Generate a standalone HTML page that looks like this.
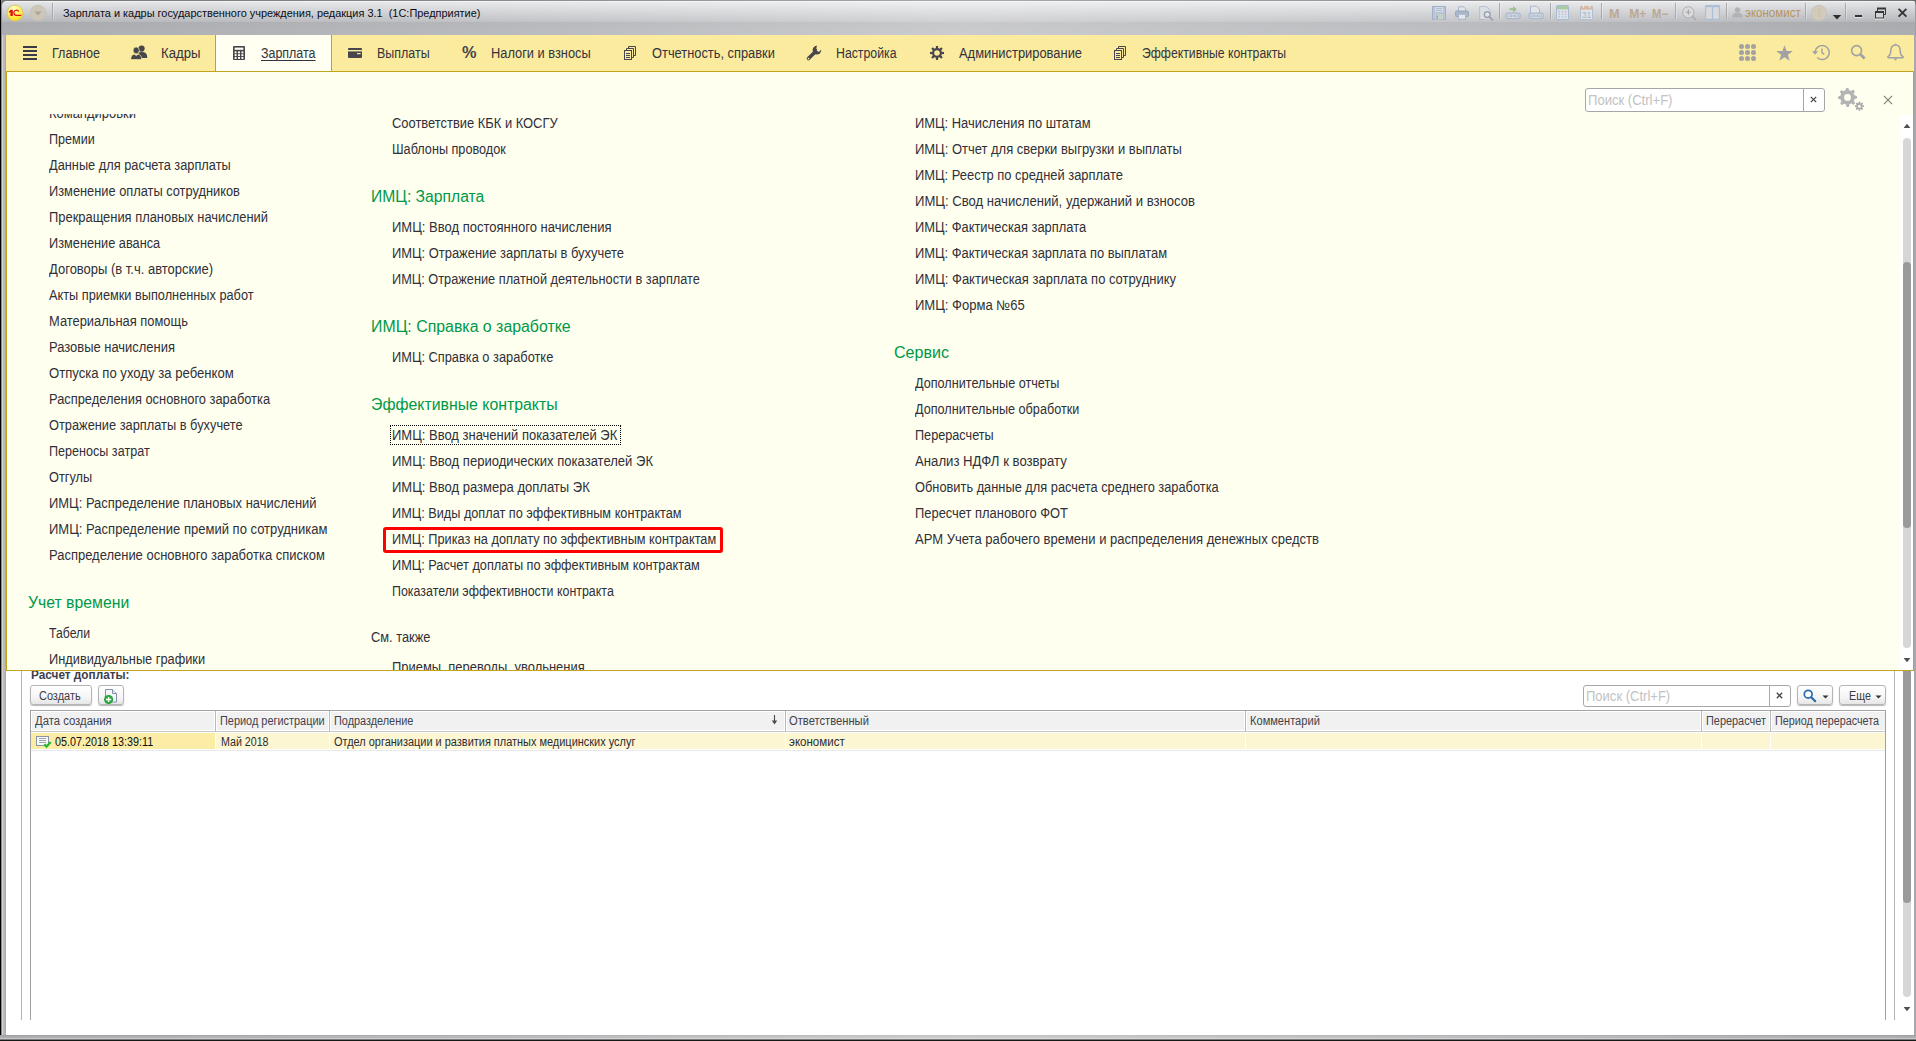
<!DOCTYPE html>
<html lang="ru">
<head>
<meta charset="utf-8">
<title>1C</title>
<style>
html,body{margin:0;padding:0;}
body{width:1916px;height:1041px;overflow:hidden;background:#fff;position:relative;font-family:"Liberation Sans",sans-serif;color:#333;}
.abs{position:absolute;}
.t{position:absolute;white-space:pre;line-height:20px;transform-origin:0 0;}
.mi{font-size:14px;color:#303038;}
.mh{font-size:16px;color:#009848;}
/* window frame */
#titlebar{left:0;top:0;width:1916px;height:35px;background:linear-gradient(to right,rgba(255,255,255,0) 0%,rgba(255,255,255,0.15) 25%,rgba(255,255,255,0.37) 50%,rgba(255,255,255,0.22) 75%,rgba(255,255,255,0) 100%),linear-gradient(to bottom,#767676 0,#767676 1px,#f2f2f2 1px,#f2f2f2 2px,#e3e5e7 2px,#b5b6ba 22px,#a9aaae 22px,#adaeb2 35px);}
#lb{left:0;top:35px;width:6px;height:1006px;background:linear-gradient(to right,#000 0,#000 1px,#8a8a8a 1px,#8a8a8a 2px,#d2d2d2 2px,#d2d2d2 3px,#bababa 3px,#bababa 5px,#a9a9ad 5px,#a9a9ad 6px);}
#rb{left:1914px;top:35px;width:2px;height:1006px;background:#a9a9ad;}
#lb0{left:0;top:0;width:2px;height:35px;background:linear-gradient(to right,#000 0,#000 1px,#8e8e8e 1px,#8e8e8e 2px);}
#rb0{left:1915px;top:2px;width:1px;height:33px;background:#9c9ca0;}
#cornl{left:0;top:0;width:5px;height:5px;}

#bb{left:0;top:1035px;width:1916px;height:6px;background:linear-gradient(to right,rgba(255,255,255,0) 0%,rgba(255,255,255,0.15) 25%,rgba(255,255,255,0.37) 50%,rgba(255,255,255,0.22) 75%,rgba(255,255,255,0) 100%) 0 0/100% 4px no-repeat,linear-gradient(to bottom,#a0a0a4 0,#a0a0a4 1px,#adadb1 1px,#adadb1 3px,#c6c6ca 3px,#c6c6ca 4px,#7c7c7c 4px,#7c7c7c 5px,#161a16 5px,#161a16 6px);}
#secbar{left:6px;top:35px;width:1908px;height:36px;background:#fbeb9e;}
#secline{left:6px;top:71px;width:1908px;height:1px;background:#c2a51e;}
#tab{left:215px;top:35px;width:117px;height:36px;background:#fffff2;border-left:1px solid #c2a51e;border-right:1px solid #c2a51e;box-sizing:border-box;}
.st{font-size:14px;color:#333340;line-height:20px;}
#panel{left:6px;top:72px;width:1908px;height:599px;background:#fffff0;border-left:1px solid #c2a51e;border-right:1px solid #c2a51e;border-bottom:1px solid #c2a51e;box-sizing:border-box;overflow:hidden;}
#clip{left:0;top:42px;width:1893px;height:556px;overflow:hidden;}
#clipin{left:-7px;top:-114px;width:1916px;height:700px;}
.tt{font-size:11px;color:#0c0c14;}
.us{font-size:12px;color:#b6955a;}
.mm{font-size:12px;font-weight:bold;color:#bba996;}
.ph{font-size:14px;color:#c2c2c2;}
.lt{font-size:12px;color:#3c3c44;}
.lb{font-size:12px;font-weight:bold;color:#3e3e4c;}
.lh{font-size:12px;color:#42424a;}
.lr{font-size:12px;color:#2c2c34;}
.sep{top:711px;width:3px;height:38px;background:linear-gradient(to right,#fff 0,#fff 1px,#b6b6b6 1px,#b6b6b6 2px,#fff 2px);}
.btn{position:absolute;box-sizing:border-box;border:1px solid #b4b4b4;border-radius:3px;background:linear-gradient(to bottom,#ffffff 0%,#f6f6f6 60%,#e6e6e6 100%);box-shadow:0 1px 1px rgba(0,0,0,0.28);}
.inp{position:absolute;box-sizing:border-box;border:1px solid #a8a8a8;border-radius:3px;background:#fff;}
</style>
</head>
<body>
<!-- ===== lower pane (drawn first, panel overlays) ===== -->
<div class="abs" id="lower" style="left:6px;top:671px;width:1908px;height:364px;background:#fff;"></div>
<div class="abs" style="left:21px;top:671px;width:1px;height:349px;background:#b4b4b4;"></div>
<div class="abs" style="left:30px;top:710px;width:1px;height:310px;background:#a0a0a0;"></div>
<div class="abs" style="left:1885px;top:710px;width:1px;height:310px;background:#a0a0a0;"></div>
<div class="abs" style="left:1894px;top:671px;width:1px;height:349px;background:#b4b4b4;"></div>
<div class="t lb" style="left:30.5px;top:665px;transform:scaleX(0.9830);">Расчет доплаты:</div>
<!-- buttons -->
<div class="btn" style="left:30px;top:685px;width:62px;height:20px;"></div>
<div class="t lt" style="left:39.3px;top:686px;transform:scaleX(0.9125);">Создать</div>
<div class="btn" style="left:98px;top:685px;width:26px;height:20px;"></div>
<svg class="abs" style="left:104px;top:688px" width="15" height="17" viewBox="0 0 15 17">
  <path d="M1.5 1.5 H8.5 L12.5 5.5 V14 H1.5 Z" fill="#f6f7f9" stroke="#8494aa" stroke-width="1"/>
  <path d="M8.5 1.5 V5.5 H12.5" fill="#e4e8ee" stroke="#8494aa" stroke-width="1"/>
  <circle cx="4.6" cy="11.5" r="4.5" fill="#1f9c33"/>
  <circle cx="4.6" cy="11.5" r="3.6" fill="#2fae42"/>
  <path d="M4.6 8.9 V14.1 M2 11.5 H7.2" stroke="#fff" stroke-width="1.4"/>
</svg>
<!-- search input -->
<div class="inp" style="left:1583px;top:685px;width:208px;height:22px;"></div>
<div class="abs" style="left:1769px;top:686px;width:1px;height:20px;background:#a8a8a8;"></div>
<div class="t ph" style="left:1586px;top:686px;transform:scaleX(0.9300);">Поиск (Ctrl+F)</div>
<svg class="abs" style="left:1776px;top:692px" width="7" height="7" viewBox="0 0 7 7"><path d="M0.8 0.8 L6.2 6.2 M6.2 0.8 L0.8 6.2" stroke="#444" stroke-width="1.25"/></svg>
<div class="btn" style="left:1797px;top:685px;width:36px;height:20px;"></div>
<svg class="abs" style="left:1803px;top:689px" width="14" height="14" viewBox="0 0 14 14">
  <circle cx="5.2" cy="5.2" r="3.9" fill="#fff" stroke="#2a6cae" stroke-width="1.7"/>
  <path d="M8.2 8.2 L12.2 12.2" stroke="#2a6cae" stroke-width="2.2" stroke-linecap="round"/>
</svg>
<svg class="abs" style="left:1822px;top:695px" width="7" height="4" viewBox="0 0 7 4"><path d="M0.5 0.4 H6.5 L3.5 3.6 Z" fill="#333"/></svg>
<div class="btn" style="left:1839px;top:685px;width:47px;height:20px;"></div>
<div class="t lt" style="left:1849px;top:686px;transform:scaleX(0.8963);">Еще</div>
<svg class="abs" style="left:1875px;top:695px" width="7" height="4" viewBox="0 0 7 4"><path d="M0.5 0.4 H6.5 L3.5 3.6 Z" fill="#333"/></svg>
<!-- table -->
<div class="abs" style="left:30px;top:710px;width:1856px;height:1px;background:#a4a4a4;"></div>
<div class="abs" style="left:31px;top:731px;width:1854px;height:1px;background:#c6c6c6;"></div>
<div class="abs" style="left:32px;top:712px;width:182px;height:18px;background:#f1f1f1;"></div>
<div class="abs" style="left:217px;top:712px;width:111px;height:18px;background:#f1f1f1;"></div>
<div class="abs" style="left:331px;top:712px;width:453px;height:18px;background:#f1f1f1;"></div>
<div class="abs" style="left:787px;top:712px;width:457px;height:18px;background:#f1f1f1;"></div>
<div class="abs" style="left:1247px;top:712px;width:453px;height:18px;background:#f1f1f1;"></div>
<div class="abs" style="left:1703px;top:712px;width:66px;height:18px;background:#f1f1f1;"></div>
<div class="abs" style="left:1772px;top:712px;width:113px;height:18px;background:#f1f1f1;"></div>
<div class="abs" style="left:215px;top:711px;width:1px;height:20px;background:#b8b8b8;"></div>
<div class="abs" style="left:329px;top:711px;width:1px;height:20px;background:#b8b8b8;"></div>
<div class="abs" style="left:785px;top:711px;width:1px;height:20px;background:#b8b8b8;"></div>
<div class="abs" style="left:1245px;top:711px;width:1px;height:20px;background:#b8b8b8;"></div>
<div class="abs" style="left:1701px;top:711px;width:1px;height:20px;background:#b8b8b8;"></div>
<div class="abs" style="left:1770px;top:711px;width:1px;height:20px;background:#b8b8b8;"></div>
<div class="abs" style="left:31px;top:733px;width:1854px;height:16px;background:#fdf6d3;"></div>
<div class="abs" style="left:31px;top:733px;width:184px;height:16px;background:#fbeda5;"></div>
<div class="abs" style="left:215px;top:733px;width:1px;height:16px;background:#fff;"></div>
<div class="abs" style="left:329px;top:733px;width:1px;height:16px;background:#fff;"></div>
<div class="abs" style="left:785px;top:733px;width:1px;height:16px;background:#fff;"></div>
<div class="abs" style="left:1245px;top:733px;width:1px;height:16px;background:#fff;"></div>
<div class="abs" style="left:1701px;top:733px;width:1px;height:16px;background:#fff;"></div>
<div class="abs" style="left:1770px;top:733px;width:1px;height:16px;background:#fff;"></div>
<div class="abs" style="left:31px;top:750px;width:1854px;height:1px;background:#e8e8ea;"></div>
<div class="t lh" style="left:35px;top:711px;transform:scaleX(0.9420);">Дата создания</div>
<div class="t lh" style="left:220px;top:711px;transform:scaleX(0.9101);">Период регистрации</div>
<div class="t lh" style="left:334px;top:711px;transform:scaleX(0.9071);">Подразделение</div>
<div class="t lh" style="left:789.3px;top:711px;transform:scaleX(0.9324);">Ответственный</div>
<div class="t lh" style="left:1250px;top:711px;transform:scaleX(0.9240);">Комментарий</div>
<div class="t lh" style="left:1706px;top:711px;transform:scaleX(0.9091);">Перерасчет</div>
<div class="t lh" style="left:1775px;top:711px;transform:scaleX(0.8991);">Период перерасчета</div>
<svg class="abs" style="left:771px;top:715px" width="7" height="10" viewBox="0 0 7 10"><path d="M3.5 0 V8" stroke="#4a4a4a" stroke-width="1.1"/><path d="M0.8 5.6 L3.5 9.4 L6.2 5.6 Z" fill="#4a4a4a"/></svg>
<!-- row -->
<svg class="abs" style="left:36px;top:736px" width="17" height="14" viewBox="0 0 17 14">
  <rect x="0.5" y="0.5" width="12" height="9" fill="#f9f9f8" stroke="#8a96a4" stroke-width="1"/>
  <rect x="3" y="2" width="7" height="1" fill="#9aa6b6"/><rect x="3" y="4" width="7" height="1" fill="#9aa6b6"/><rect x="3" y="6" width="7" height="1" fill="#9aa6b6"/>
  <path d="M8.3 8.2 L10.5 10.6 L14.7 5.9" fill="none" stroke="#22ba32" stroke-width="2.2"/>
</svg>
<div class="t lr" style="left:55px;top:732px;transform:scaleX(0.8991);color:#101010;">05.07.2018 13:39:11</div>
<div class="t lr" style="left:220.5px;top:732px;transform:scaleX(0.8879);">Май 2018</div>
<div class="t lr" style="left:333.5px;top:732px;transform:scaleX(0.9126);">Отдел организации и развития платных медицинских услуг</div>
<div class="t lr" style="left:789.3px;top:732px;transform:scaleX(0.9620);">экономист</div>
<!-- lower scrollbar -->
<div class="abs" style="left:1903px;top:671px;width:8px;height:326px;border-radius:0 0 4px 4px;background:#d6d6d6;"></div>
<div class="abs" style="left:1903px;top:671px;width:8px;height:232px;border-radius:0 0 4px 4px;background:#9a9a9a;"></div>
<svg class="abs" style="left:1903px;top:1006px" width="8" height="6" viewBox="0 0 8 6"><path d="M0.6 1 L4 5.2 L7.4 1 Z" fill="#505050"/></svg>


<!-- ===== title bar ===== -->
<div class="abs" id="titlebar"></div>
<!-- 1C logo -->
<svg class="abs" style="left:6px;top:4px" width="18" height="18" viewBox="0 0 18 18">
  <defs>
    <radialGradient id="g1c" cx="0.42" cy="0.22" r="0.9">
      <stop offset="0" stop-color="#ffffd0"/><stop offset="0.4" stop-color="#fff56e"/><stop offset="1" stop-color="#fdd400"/>
    </radialGradient>
  </defs>
  <circle cx="9" cy="9" r="7.9" fill="url(#g1c)" stroke="#dcc456" stroke-width="0.9"/>
  <path d="M2.9 7.7 L4.7 5.8 L6.8 5.8 L6.8 12.1 L4.4 12.1 L4.4 8.1 L2.9 9 Z" fill="#e40c0a"/>
  <path d="M13.3 7.2 A3.25 3.25 0 1 0 10.5 12.1 L15.3 12.1 L15.3 10.7 L10.5 10.7 A2.0 2.0 0 1 1 12.23 7.8 Z" fill="#e40c0a"/>
</svg>
<!-- dropdown round button -->
<svg class="abs" style="left:29px;top:4px" width="18" height="18" viewBox="0 0 18 18">
  <circle cx="9" cy="9" r="7.8" fill="#cdc7b9" stroke="#c2bcae" stroke-width="0.6"/>
  <path d="M5.4 7.6 L12.6 7.6 L9 11.4 Z" fill="#aaa598"/>
</svg>
<div class="abs" style="left:52px;top:3px;width:1px;height:16px;background:#a9a9ad;"></div>
<div class="abs" style="left:53px;top:3px;width:1px;height:16px;background:rgba(255,255,255,0.32);"></div>
<div class="t tt" style="left:62.6px;top:3px;transform:scaleX(0.9943);">Зарплата и кадры государственного учреждения, редакция 3.1  (1С:Предприятие)</div>

<!-- toolbar icons (disabled look) -->
<!-- save -->
<svg class="abs" style="left:1432px;top:6px" width="14" height="14" viewBox="0 0 14 14">
  <path d="M0.5 0.5 H13.5 V13.5 H0.5 Z" fill="#b9c4d6" stroke="#9fb0c8"/>
  <rect x="3" y="1" width="8" height="5" fill="#d4dbe6"/>
  <path d="M4 2.5 H10 M4 4.5 H10" stroke="#a8b6cc" stroke-width="0.8"/>
  <rect x="3" y="8.5" width="8" height="5" fill="#c8d2c4"/>
  <rect x="4" y="9.5" width="2" height="3.5" fill="#9fb0c8"/>
</svg>
<!-- print -->
<svg class="abs" style="left:1455px;top:6px" width="14" height="14" viewBox="0 0 14 14">
  <path d="M3.5 5 V0.8 H8.5 L10.5 2.8 V5" fill="#e4e6ea" stroke="#a9b6cb" stroke-width="1"/>
  <rect x="0.5" y="5" width="13" height="5.6" rx="1.2" fill="#aab6ca" stroke="#97a6be"/>
  <rect x="3.5" y="8.2" width="7" height="5" fill="#e6e7ea" stroke="#a9b6cb"/>
</svg>
<!-- preview -->
<svg class="abs" style="left:1479px;top:6px" width="15" height="15" viewBox="0 0 15 15">
  <path d="M0.8 0.8 H7.5 L11 4.2 V8 M0.8 0.8 V13.2 H5.5" fill="none" stroke="#aab8cc" stroke-width="1"/>
  <path d="M1.3 1.3 H7.3 L10.5 4.4 V12.7 H1.3 Z" fill="#dcdfe4"/>
  <circle cx="8.2" cy="8.6" r="2.9" fill="#e4e6ea" stroke="#9aa4b0" stroke-width="1.5"/>
  <path d="M10.4 10.8 L13.4 13.8" stroke="#9aa4b0" stroke-width="1.9" stroke-linecap="round"/>
</svg>
<div class="abs" style="left:1499px;top:3px;width:1px;height:16px;background:#a9a9ad;"></div><div class="abs" style="left:1500px;top:3px;width:1px;height:16px;background:rgba(255,255,255,0.32);"></div>
<!-- link with arrow -->
<svg class="abs" style="left:1505px;top:5px" width="16" height="15" viewBox="0 0 16 15">
  <path d="M4.5 3.2 H8 V1 L11.8 4.2 L8 7.4 V5.2 H4.5 Z" fill="#9cc08c"/>
  <rect x="0.8" y="8.2" width="14.4" height="5.4" rx="2" fill="#d8dde6" stroke="#aab8cc" stroke-width="1.2"/>
  <rect x="2.6" y="10" width="4" height="1.8" fill="none" stroke="#aab8cc" stroke-width="0.8"/>
  <rect x="9.4" y="10" width="4" height="1.8" fill="none" stroke="#aab8cc" stroke-width="0.8"/>
  <path d="M6.6 10.9 H9.4" stroke="#aab8cc" stroke-width="1"/>
</svg>
<!-- link with doc -->
<svg class="abs" style="left:1528px;top:5px" width="16" height="15" viewBox="0 0 16 15">
  <path d="M2.5 8 V1.2 H8.5 L11.5 4 V8" fill="#e2e4e8" stroke="#aab8cc" stroke-width="1"/>
  <rect x="0.8" y="8.2" width="14.4" height="5.4" rx="2" fill="#d8dde6" stroke="#aab8cc" stroke-width="1.2"/>
  <rect x="2.6" y="10" width="4" height="1.8" fill="none" stroke="#aab8cc" stroke-width="0.8"/>
  <rect x="9.4" y="10" width="4" height="1.8" fill="none" stroke="#aab8cc" stroke-width="0.8"/>
  <path d="M6.6 10.9 H9.4" stroke="#aab8cc" stroke-width="1"/>
</svg>
<div class="abs" style="left:1550px;top:3px;width:1px;height:16px;background:#a9a9ad;"></div><div class="abs" style="left:1551px;top:3px;width:1px;height:16px;background:rgba(255,255,255,0.32);"></div>
<!-- calculator -->
<svg class="abs" style="left:1556px;top:5px" width="13" height="15" viewBox="0 0 13 15">
  <rect x="0.5" y="0.5" width="12" height="14" rx="0.8" fill="#dde2ea" stroke="#a8bad0"/>
  <rect x="1" y="1" width="11" height="3.4" fill="#a9cba2"/>
  <g fill="#b4c2d6"><rect x="2.4" y="6" width="1.6" height="1.4"/><rect x="5.6" y="6" width="1.6" height="1.4"/><rect x="2.4" y="8.6" width="1.6" height="1.4"/><rect x="5.6" y="8.6" width="1.6" height="1.4"/><rect x="2.4" y="11.2" width="1.6" height="1.4"/><rect x="5.6" y="11.2" width="1.6" height="1.4"/><rect x="8.8" y="8.6" width="1.6" height="1.4"/><rect x="8.8" y="11.2" width="1.6" height="1.4"/></g>
  <rect x="8.8" y="6" width="1.6" height="1.4" fill="#dcaaa6"/>
</svg>
<!-- calendar -->
<svg class="abs" style="left:1580px;top:5px" width="13" height="15" viewBox="0 0 13 15">
  <rect x="0.5" y="1.5" width="12" height="13" rx="0.8" fill="#dfe3ea" stroke="#b0bed2"/>
  <rect x="0.5" y="1" width="12" height="3.6" fill="#d6b8a4"/>
  <rect x="2.8" y="0" width="1.4" height="2.6" fill="#eceae6"/><rect x="8.8" y="0" width="1.4" height="2.6" fill="#eceae6"/>
  <text x="6.5" y="12.6" font-family="Liberation Sans" font-size="8.5" text-anchor="middle" fill="#a4b2c6">31</text>
</svg>
<div class="abs" style="left:1601px;top:3px;width:1px;height:16px;background:#a9a9ad;"></div><div class="abs" style="left:1602px;top:3px;width:1px;height:16px;background:rgba(255,255,255,0.32);"></div>
<div class="t mm" style="left:1609.2px;top:4px;transform:scaleX(1.0625);">M</div>
<div class="t mm" style="left:1629.2px;top:4px;">M+</div>
<div class="t mm" style="left:1652.4px;top:4px;transform:scaleX(0.9398);">M−</div>
<div class="abs" style="left:1675px;top:3px;width:1px;height:16px;background:#a9a9ad;"></div><div class="abs" style="left:1676px;top:3px;width:1px;height:16px;background:rgba(255,255,255,0.32);"></div>
<!-- zoom -->
<svg class="abs" style="left:1682px;top:6px" width="15" height="15" viewBox="0 0 15 15">
  <circle cx="6.3" cy="6.3" r="5.6" fill="#dcdcde" stroke="#adadb0" stroke-width="1"/>
  <path d="M3.6 6.3 H9 M6.3 3.6 V9" stroke="#a4a4a8" stroke-width="1.1"/>
  <path d="M10.4 10.4 L13.6 13.6" stroke="#adadb0" stroke-width="1.7" stroke-linecap="round"/>
</svg>
<!-- panels icon -->
<svg class="abs" style="left:1705px;top:5px" width="15" height="15" viewBox="0 0 15 15">
  <rect x="0.6" y="0.6" width="13.8" height="13.8" rx="0.8" fill="#dadadc" stroke="#a9c0d8" stroke-width="1.2"/>
  <rect x="0.6" y="0.6" width="13.8" height="1.6" fill="#a9c0d8"/>
  <path d="M7.5 1 V14.4" stroke="#a9c0d8" stroke-width="1.2"/>
</svg>
<div class="abs" style="left:1726px;top:3px;width:1px;height:16px;background:#a9a9ad;"></div><div class="abs" style="left:1727px;top:3px;width:1px;height:16px;background:rgba(255,255,255,0.32);"></div>
<!-- user -->
<svg class="abs" style="left:1732px;top:7px" width="11" height="11" viewBox="0 0 11 11">
  <circle cx="5.5" cy="2.9" r="2.6" fill="#b2b2b4"/>
  <path d="M0.4 10.4 C0.4 6.8 2.6 5.8 5.5 5.8 C8.4 5.8 10.6 6.8 10.6 10.4 Z" fill="#b2b2b4"/>
</svg>
<div class="t us" style="left:1745.3px;top:3px;transform:scaleX(0.9620);">экономист</div>
<div class="abs" style="left:1805px;top:3px;width:1px;height:16px;background:#a9a9ad;"></div><div class="abs" style="left:1806px;top:3px;width:1px;height:16px;background:rgba(255,255,255,0.32);"></div>
<!-- info -->
<svg class="abs" style="left:1810px;top:4px" width="18" height="18" viewBox="0 0 18 18">
  <circle cx="9" cy="9" r="7.8" fill="#d2cbbd" stroke="#c6bfb0" stroke-width="0.6"/>
  <circle cx="9.3" cy="5.2" r="1.2" fill="#c9c6a6"/>
  <path d="M7.4 7.4 H10.2 V12 H11.2 V13 H7.2 V12 H8.4 V8.4 H7.4 Z" fill="#c9c6a6"/>
</svg>
<svg class="abs" style="left:1832px;top:14px" width="10" height="6" viewBox="0 0 10 6"><path d="M0.8 1 H9.2 L5 5.4 Z" fill="#2e2e2e"/></svg>
<div class="abs" style="left:1845px;top:3px;width:1px;height:16px;background:#a9a9ad;"></div><div class="abs" style="left:1846px;top:3px;width:1px;height:16px;background:rgba(255,255,255,0.32);"></div>
<!-- window controls -->
<div class="abs" style="left:1855px;top:15px;width:7px;height:2px;background:#333;box-shadow:0 1px 0 #e4e4e4;"></div>
<svg class="abs" style="left:1874px;top:7px" width="14" height="13" viewBox="0 0 14 13">
  <path d="M3.5 4 V1.5 H11.5 V7.5 H9.5" fill="none" stroke="#363636" stroke-width="1"/>
  <path d="M3 1.5 H12" stroke="#363636" stroke-width="2"/>
  <rect x="1.5" y="5" width="8" height="6" fill="#d4d4d6" stroke="#363636" stroke-width="1"/>
  <path d="M1 5 H10" stroke="#363636" stroke-width="2"/>
  <path d="M1 12.2 H10" stroke="#eaeaea" stroke-width="0.8"/>
</svg>
<svg class="abs" style="left:1897px;top:7px" width="11" height="11" viewBox="0 0 11 11">
  <path d="M1.6 1.9 L9.4 9.6 M9.4 1.9 L1.6 9.6" stroke="#363636" stroke-width="1.9"/>
</svg>


<!-- ===== section bar ===== -->
<div class="abs" id="secbar"></div>
<div class="abs" id="tab"></div>
<div class="abs" id="secline"></div>
<!-- hamburger -->
<svg class="abs" style="left:23px;top:46px" width="14" height="14" viewBox="0 0 14 14"><path d="M0 1 H14 M0 5 H14 M0 9 H14 M0 13 H14" stroke="#3b3b45" stroke-width="2"/></svg>
<div class="t st" style="left:51.5px;top:43px;transform:scaleX(0.8973);">Главное</div>
<!-- people -->
<svg class="abs" style="left:130px;top:45px" width="18" height="15" viewBox="0 0 18 15">
  <g fill="#46464c">
  <circle cx="11.6" cy="3.6" r="3.1"/>
  <path d="M8.6 8 C9.6 6.6 13.6 6.6 15 7.6 C16.6 8.6 17.2 10.4 17.2 13 L8.6 13 Z"/>
  </g>
  <g fill="#46464c" stroke="#fbeb9e" stroke-width="0.7">
  <ellipse cx="6.2" cy="5.4" rx="3.1" ry="3.4"/>
  <path d="M0.8 14.6 C0.8 11 2 9.6 4.4 9.2 L6.2 10.6 L8 9.2 C10.4 9.6 11.6 11 11.6 14.6 Z"/>
  </g>
</svg>
<div class="t st" style="left:161px;top:43px;transform:scaleX(0.9409);">Кадры</div>
<!-- calculator -->
<svg class="abs" style="left:233px;top:46px" width="12" height="14" viewBox="0 0 12 14">
  <rect x="0" y="0" width="12" height="14" rx="1" fill="#46464c"/>
  <rect x="1.6" y="1.6" width="8.8" height="2.2" fill="#fffff2"/>
  <g fill="#fffff2"><rect x="1.6" y="5.4" width="2" height="1.9"/><rect x="5" y="5.4" width="2" height="1.9"/><rect x="8.4" y="5.4" width="2" height="1.9"/>
  <rect x="1.6" y="8.2" width="2" height="1.9"/><rect x="5" y="8.2" width="2" height="1.9"/><rect x="8.4" y="8.2" width="2" height="1.9"/>
  <rect x="1.6" y="11" width="2" height="1.9"/><rect x="5" y="11" width="2" height="1.9"/><rect x="8.4" y="11" width="2" height="1.9"/></g>
</svg>
<div class="t st" style="left:260.8px;top:43px;transform:scaleX(0.8892);text-decoration:underline;text-underline-offset:1.5px;text-decoration-thickness:1px;text-decoration-skip-ink:none;">Зарплата</div>
<!-- card -->
<svg class="abs" style="left:348px;top:48px" width="14" height="10" viewBox="0 0 14 10">
  <rect x="0" y="0" width="14" height="10" rx="1" fill="#46464c"/>
  <rect x="0" y="2" width="14" height="1.4" fill="#fbeb9e"/>
  <rect x="9" y="5" width="3.6" height="1.2" fill="#fbeb9e"/>
</svg>
<div class="t st" style="left:377px;top:43px;transform:scaleX(0.8899);">Выплаты</div>
<div class="t" style="left:461.8px;top:43.4px;font-size:17px;font-weight:bold;color:#46464c;line-height:20px;transform:scaleX(0.96);transform-origin:0 0;">%</div>
<div class="t st" style="left:490.5px;top:43px;transform:scaleX(0.9162);">Налоги и взносы</div>
<!-- docs -->
<svg class="abs docs" style="left:624px;top:46px" width="13" height="14" viewBox="0 0 13 14">
  <path d="M4.5 2.5 V0.5 H11.5 V9.5 H9.5" fill="none" stroke="#46464c" stroke-width="1"/>
  <path d="M2.5 4.5 V2.5 H9.5 V11.5 H7.5" fill="none" stroke="#46464c" stroke-width="1"/>
  <rect x="0.5" y="4.5" width="7" height="9" fill="none" stroke="#46464c" stroke-width="1"/>
  <path d="M2 7.5 H6 M2 9.5 H6 M2 11.5 H6" stroke="#46464c" stroke-width="1"/>
</svg>
<div class="t st" style="left:652px;top:43px;transform:scaleX(0.9181);">Отчетность, справки</div>
<!-- wrench -->
<svg class="abs" style="left:806px;top:45px" width="16" height="16" viewBox="0 0 16 16">
  <path d="M2.5 13.6 L9.6 6.5" stroke="#46464c" stroke-width="3.5" stroke-linecap="round"/>
  <circle cx="10.9" cy="5.1" r="4.3" fill="#46464c"/>
  <path d="M10.6 5.4 L15.2 0.8 L17 4.2 L12.4 7.2 Z" transform="rotate(-8 10.9 5.1)" fill="#fbeb9e"/>
  <path d="M11.2 0.2 L15.4 -0.4 L15.6 3 L12.4 5.6 L10.2 3.6 Z" fill="#fbeb9e"/>
  <circle cx="2.5" cy="13.6" r="0.85" fill="#fbeb9e"/>
</svg>
<div class="t st" style="left:836px;top:43px;transform:scaleX(0.8786);">Настройка</div>
<!-- gear -->
<svg class="abs" style="left:930px;top:46px" width="14" height="14" viewBox="0 0 14 14">
  <g transform="translate(7 7)">
  <circle r="3.9" fill="none" stroke="#46464c" stroke-width="2.2"/>
  <g fill="#46464c">
   <rect x="-1.1" y="-7" width="2.2" height="2.6"/><rect x="-1.1" y="4.4" width="2.2" height="2.6"/>
   <rect x="-7" y="-1.1" width="2.6" height="2.2"/><rect x="4.4" y="-1.1" width="2.6" height="2.2"/>
   <g transform="rotate(45)"><rect x="-1.1" y="-7" width="2.2" height="2.6"/><rect x="-1.1" y="4.4" width="2.2" height="2.6"/><rect x="-7" y="-1.1" width="2.6" height="2.2"/><rect x="4.4" y="-1.1" width="2.6" height="2.2"/></g>
  </g></g>
</svg>
<div class="t st" style="left:958.5px;top:43px;transform:scaleX(0.9214);">Администрирование</div>
<svg class="abs docs" style="left:1114px;top:46px" width="13" height="14" viewBox="0 0 13 14">
  <path d="M4.5 2.5 V0.5 H11.5 V9.5 H9.5" fill="none" stroke="#46464c" stroke-width="1"/>
  <path d="M2.5 4.5 V2.5 H9.5 V11.5 H7.5" fill="none" stroke="#46464c" stroke-width="1"/>
  <rect x="0.5" y="4.5" width="7" height="9" fill="none" stroke="#46464c" stroke-width="1"/>
  <path d="M2 7.5 H6 M2 9.5 H6 M2 11.5 H6" stroke="#46464c" stroke-width="1"/>
</svg>
<div class="t st" style="left:1142px;top:43px;transform:scaleX(0.8743);">Эффективные контракты</div>
<!-- right tools -->
<svg class="abs" style="left:1739px;top:44px" width="17" height="17" viewBox="0 0 17 17"><g fill="#a2a2a6">
 <circle cx="2.5" cy="2.5" r="2.5"/><circle cx="8.5" cy="2.5" r="2.5"/><circle cx="14.5" cy="2.5" r="2.5"/>
 <circle cx="2.5" cy="8.5" r="2.5"/><circle cx="8.5" cy="8.5" r="2.5"/><circle cx="14.5" cy="8.5" r="2.5"/>
 <circle cx="2.5" cy="14.5" r="2.5"/><circle cx="8.5" cy="14.5" r="2.5"/><circle cx="14.5" cy="14.5" r="2.5"/></g></svg>
<svg class="abs" style="left:1776px;top:45px" width="17" height="16" viewBox="0 0 17 16"><path d="M8.5 0.2 L10.6 6 L16.8 6.1 L11.9 9.8 L13.7 15.8 L8.5 12.2 L3.3 15.8 L5.1 9.8 L0.2 6.1 L6.4 6 Z" fill="#a2a2a6"/></svg>
<svg class="abs" style="left:1811px;top:44px" width="19" height="17" viewBox="0 0 19 17">
  <path d="M4.2 8.4 A7 7 0 1 1 6.2 13.4" fill="none" stroke="#a2a2a6" stroke-width="1.5"/>
  <path d="M1 7.2 H7.2 L4.1 10.8 Z" fill="#a2a2a6"/>
  <path d="M10.9 4.4 V8.6 L13.2 10.4" fill="none" stroke="#a2a2a6" stroke-width="1.4"/>
</svg>
<svg class="abs" style="left:1850px;top:44px" width="17" height="17" viewBox="0 0 17 17">
  <circle cx="6.6" cy="6.6" r="5" fill="none" stroke="#a2a2a6" stroke-width="1.6"/>
  <path d="M10.6 10.6 L14.6 14.6" stroke="#a2a2a6" stroke-width="2.8"/>
</svg>
<svg class="abs" style="left:1887px;top:43px" width="17" height="19" viewBox="0 0 17 19">
  <path d="M8.5 2 C4.8 2 3.8 5.2 3.8 8 C3.8 11.6 2.8 12.6 1.2 13.4 C0.6 13.8 0.8 14.8 1.6 14.8 H15.4 C16.2 14.8 16.4 13.8 15.8 13.4 C14.2 12.6 13.2 11.6 13.2 8 C13.2 5.2 12.2 2 8.5 2 Z" fill="none" stroke="#a2a2a6" stroke-width="1.5"/>
  <path d="M7 1.8 L8.5 0.6 L10 1.8 Z" fill="#a2a2a6"/>
  <path d="M6.4 15.4 H10.6 L8.5 17.8 Z" fill="#a2a2a6"/>
</svg>


<!-- ===== menu panel ===== -->
<div class="abs" id="panel">
  <div class="abs" id="clip"><div class="abs" id="clipin">
<div class="t mi" style="left:48.5px;top:103px;transform:scaleX(0.9241);">Командировки</div>
<div class="t mi" style="left:48.5px;top:129px;transform:scaleX(0.8992);">Премии</div>
<div class="t mi" style="left:48.5px;top:155px;transform:scaleX(0.9134);">Данные для расчета зарплаты</div>
<div class="t mi" style="left:48.5px;top:181px;transform:scaleX(0.9156);">Изменение оплаты сотрудников</div>
<div class="t mi" style="left:48.5px;top:207px;transform:scaleX(0.9217);">Прекращения плановых начислений</div>
<div class="t mi" style="left:48.5px;top:233px;transform:scaleX(0.9110);">Изменение аванса</div>
<div class="t mi" style="left:48.5px;top:259px;transform:scaleX(0.9281);">Договоры (в т.ч. авторские)</div>
<div class="t mi" style="left:48.5px;top:285px;transform:scaleX(0.9109);">Акты приемки выполненных работ</div>
<div class="t mi" style="left:48.5px;top:311px;transform:scaleX(0.9209);">Материальная помощь</div>
<div class="t mi" style="left:48.5px;top:337px;transform:scaleX(0.9248);">Разовые начисления</div>
<div class="t mi" style="left:48.5px;top:363px;transform:scaleX(0.9379);">Отпуска по уходу за ребенком</div>
<div class="t mi" style="left:48.5px;top:389px;transform:scaleX(0.9188);">Распределения основного заработка</div>
<div class="t mi" style="left:48.5px;top:415px;transform:scaleX(0.9154);">Отражение зарплаты в бухучете</div>
<div class="t mi" style="left:48.5px;top:441px;transform:scaleX(0.8996);">Переносы затрат</div>
<div class="t mi" style="left:48.5px;top:467px;transform:scaleX(0.9099);">Отгулы</div>
<div class="t mi" style="left:48.5px;top:493px;transform:scaleX(0.9255);">ИМЦ: Распределение плановых начислений</div>
<div class="t mi" style="left:48.5px;top:519px;transform:scaleX(0.9303);">ИМЦ: Распределение премий по сотрудникам</div>
<div class="t mi" style="left:48.5px;top:545px;transform:scaleX(0.9264);">Распределение основного заработка списком</div>
<div class="t mi" style="left:48.5px;top:623px;transform:scaleX(0.8754);">Табели</div>
<div class="t mi" style="left:48.5px;top:649px;transform:scaleX(0.9144);">Индивидуальные графики</div>
<div class="t mi" style="left:391.5px;top:113px;transform:scaleX(0.9224);">Соответствие КБК и КОСГУ</div>
<div class="t mi" style="left:391.5px;top:139px;transform:scaleX(0.9044);">Шаблоны проводок</div>
<div class="t mi" style="left:391.5px;top:217px;transform:scaleX(0.9300);">ИМЦ: Ввод постоянного начисления</div>
<div class="t mi" style="left:391.5px;top:243px;transform:scaleX(0.9225);">ИМЦ: Отражение зарплаты в бухучете</div>
<div class="t mi" style="left:391.5px;top:269px;transform:scaleX(0.9114);">ИМЦ: Отражение платной деятельности в зарплате</div>
<div class="t mi" style="left:391.5px;top:347px;transform:scaleX(0.9157);">ИМЦ: Справка о заработке</div>
<div class="t mi" style="left:391.5px;top:425px;transform:scaleX(0.9279);">ИМЦ: Ввод значений показателей ЭК</div>
<div class="t mi" style="left:391.5px;top:451px;transform:scaleX(0.9316);">ИМЦ: Ввод периодических показателей ЭК</div>
<div class="t mi" style="left:391.5px;top:477px;transform:scaleX(0.9308);">ИМЦ: Ввод размера доплаты ЭК</div>
<div class="t mi" style="left:391.5px;top:503px;transform:scaleX(0.9083);">ИМЦ: Виды доплат по эффективным контрактам</div>
<div class="t mi" style="left:391.5px;top:529px;transform:scaleX(0.9103);">ИМЦ: Приказ на доплату по эффективным контрактам</div>
<div class="t mi" style="left:391.5px;top:555px;transform:scaleX(0.9105);">ИМЦ: Расчет доплаты по эффективным контрактам</div>
<div class="t mi" style="left:391.5px;top:581px;transform:scaleX(0.8874);">Показатели эффективности контракта</div>
<div class="t mi" style="left:391.5px;top:657px;transform:scaleX(0.9242);">Приемы, переводы, увольнения</div>
<div class="t mi" style="left:914.5px;top:113px;transform:scaleX(0.9219);">ИМЦ: Начисления по штатам</div>
<div class="t mi" style="left:914.5px;top:139px;transform:scaleX(0.9263);">ИМЦ: Отчет для сверки выгрузки и выплаты</div>
<div class="t mi" style="left:914.5px;top:165px;transform:scaleX(0.9224);">ИМЦ: Реестр по средней зарплате</div>
<div class="t mi" style="left:914.5px;top:191px;transform:scaleX(0.9359);">ИМЦ: Свод начислений, удержаний и взносов</div>
<div class="t mi" style="left:914.5px;top:217px;transform:scaleX(0.9207);">ИМЦ: Фактическая зарплата</div>
<div class="t mi" style="left:914.5px;top:243px;transform:scaleX(0.9222);">ИМЦ: Фактическая зарплата по выплатам</div>
<div class="t mi" style="left:914.5px;top:269px;transform:scaleX(0.9282);">ИМЦ: Фактическая зарплата по сотруднику</div>
<div class="t mi" style="left:914.5px;top:295px;transform:scaleX(0.9312);">ИМЦ: Форма №65</div>
<div class="t mi" style="left:914.5px;top:373px;transform:scaleX(0.9041);">Дополнительные отчеты</div>
<div class="t mi" style="left:914.5px;top:399px;transform:scaleX(0.9030);">Дополнительные обработки</div>
<div class="t mi" style="left:914.5px;top:425px;transform:scaleX(0.9053);">Перерасчеты</div>
<div class="t mi" style="left:914.5px;top:451px;transform:scaleX(0.9406);">Анализ НДФЛ к возврату</div>
<div class="t mi" style="left:914.5px;top:477px;transform:scaleX(0.9161);">Обновить данные для расчета среднего заработка</div>
<div class="t mi" style="left:914.5px;top:503px;transform:scaleX(0.9219);">Пересчет планового ФОТ</div>
<div class="t mi" style="left:914.5px;top:529px;transform:scaleX(0.9303);">АРМ Учета рабочего времени и распределения денежных средств</div>
<div class="t mh" style="left:28px;top:593px;transform:scaleX(0.9863);">Учет времени</div>
<div class="t mh" style="left:371px;top:187px;transform:scaleX(0.9793);">ИМЦ: Зарплата</div>
<div class="t mh" style="left:371px;top:317px;transform:scaleX(0.9920);">ИМЦ: Справка о заработке</div>
<div class="t mh" style="left:371px;top:395px;transform:scaleX(0.9904);">Эффективные контракты</div>
<div class="t mh" style="left:894px;top:343px;transform:scaleX(1.0055);">Сервис</div>
<div class="t mi" style="left:371px;top:627px;transform:scaleX(0.9154);">См. также</div>
  </div></div>
</div>
<!-- page coordinates -->
<!-- dotted focus rect: page (390,425)-(620,445) -->
<div class="abs nocal" style="left:390px;top:425px;width:231px;height:20px;box-sizing:border-box;border:1px dotted #000;"></div>
<!-- red highlight: page (383,528)-(723,553) -->
<div class="abs nocal" style="left:383px;top:527px;width:340px;height:26px;box-sizing:border-box;border:3px solid #ff0000;border-radius:3px;"></div>
<!-- search input page (1585,88)-(1825,111) -->
<div class="inp" style="left:1585px;top:88px;width:240px;height:24px;border-color:#a6a6a6;"></div>
<div class="abs" style="left:1803px;top:89px;width:1px;height:22px;background:#a6a6a6;"></div>
<div class="t ph" style="left:1588px;top:90px;transform:scaleX(0.9333);">Поиск (Ctrl+F)</div>
<svg class="abs" style="left:1810px;top:96px" width="7" height="7" viewBox="0 0 7 7"><path d="M0.8 0.8 L6.2 6.2 M6.2 0.8 L0.8 6.2" stroke="#3c3c3c" stroke-width="1.15"/></svg>
<!-- gears -->
<svg class="abs" style="left:1837px;top:87px" width="28" height="25" viewBox="0 0 28 25">
  <g transform="translate(10.5 10.4)" fill="#b4b4b4">
    <rect x="-1.85" y="-9.6" width="3.3" height="4.6" rx="1.6" transform="rotate(0)"/><rect x="-1.85" y="-9.6" width="3.3" height="4.6" rx="1.6" transform="rotate(45)"/><rect x="-1.85" y="-9.6" width="3.3" height="4.6" rx="1.6" transform="rotate(90)"/><rect x="-1.85" y="-9.6" width="3.3" height="4.6" rx="1.6" transform="rotate(135)"/><rect x="-1.85" y="-9.6" width="3.3" height="4.6" rx="1.6" transform="rotate(180)"/><rect x="-1.85" y="-9.6" width="3.3" height="4.6" rx="1.6" transform="rotate(225)"/><rect x="-1.85" y="-9.6" width="3.3" height="4.6" rx="1.6" transform="rotate(270)"/><rect x="-1.85" y="-9.6" width="3.3" height="4.6" rx="1.6" transform="rotate(315)"/>
    <circle r="7.3"/>
    <circle r="3.4" fill="#fffff0"/>
  </g>
  <g transform="translate(22.4 19.2)" fill="#aaaaaa">
    <rect x="-0.85" y="-4.6" width="1.7" height="2.5999999999999996" rx="0.5" transform="rotate(0)"/><rect x="-0.85" y="-4.6" width="1.7" height="2.5999999999999996" rx="0.5" transform="rotate(45)"/><rect x="-0.85" y="-4.6" width="1.7" height="2.5999999999999996" rx="0.5" transform="rotate(90)"/><rect x="-0.85" y="-4.6" width="1.7" height="2.5999999999999996" rx="0.5" transform="rotate(135)"/><rect x="-0.85" y="-4.6" width="1.7" height="2.5999999999999996" rx="0.5" transform="rotate(180)"/><rect x="-0.85" y="-4.6" width="1.7" height="2.5999999999999996" rx="0.5" transform="rotate(225)"/><rect x="-0.85" y="-4.6" width="1.7" height="2.5999999999999996" rx="0.5" transform="rotate(270)"/><rect x="-0.85" y="-4.6" width="1.7" height="2.5999999999999996" rx="0.5" transform="rotate(315)"/>
    <circle r="3.1"/>
    <circle r="1.5" fill="#fffff0"/>
  </g>
</svg>
<!-- close x: page center (1888,100) -->
<svg class="abs" style="left:1883px;top:95px" width="10" height="10" viewBox="0 0 10 10"><path d="M0.9 0.9 L9.1 9.1 M9.1 0.9 L0.9 9.1" stroke="#7c7c76" stroke-width="1.1"/></svg>
<!-- scrollbar page x=1900..1912, y=115..669 -->
<div class="abs" style="left:1900px;top:115px;width:13px;height:555px;background:#fff;"></div>
<svg class="abs" style="left:1903px;top:123px" width="8" height="6" viewBox="0 0 8 6"><path d="M0.6 5 L4 0.8 L7.4 5 Z" fill="#505050"/></svg>
<div class="abs" style="left:1903px;top:138px;width:8px;height:510px;border-radius:4px;background:#d6d6d6;"></div>
<div class="abs" style="left:1903px;top:262px;width:8px;height:266px;border-radius:4px;background:#9a9a9a;"></div>
<svg class="abs" style="left:1903px;top:657px" width="8" height="6" viewBox="0 0 8 6"><path d="M0.6 1 L4 5.2 L7.4 1 Z" fill="#505050"/></svg>


<!-- ===== frame borders ===== -->
<div class="abs" id="lb"></div>
<div class="abs" id="lb0"></div>
<div class="abs" id="rb0"></div>
<svg class="abs" style="left:0;top:0" width="6" height="6" viewBox="0 0 6 6"><path d="M1 1 H5.4 V1.2 C3.4 1.6 2.2 3 1.8 5.6 H1 Z" fill="#7c7c7c"/><path d="M0 0 H1 V6 H0 Z" fill="#000"/></svg>
<svg class="abs" style="left:1912px;top:0" width="4" height="4" viewBox="0 0 4 4"><path d="M4 0 H0 V1 H1.6 C2.6 1.3 3.2 2 3.4 3 V4 H4 Z" fill="#6a6a6a"/></svg>
<div class="abs" id="rb"></div>
<div class="abs" id="bb"></div>
</body>
</html>
